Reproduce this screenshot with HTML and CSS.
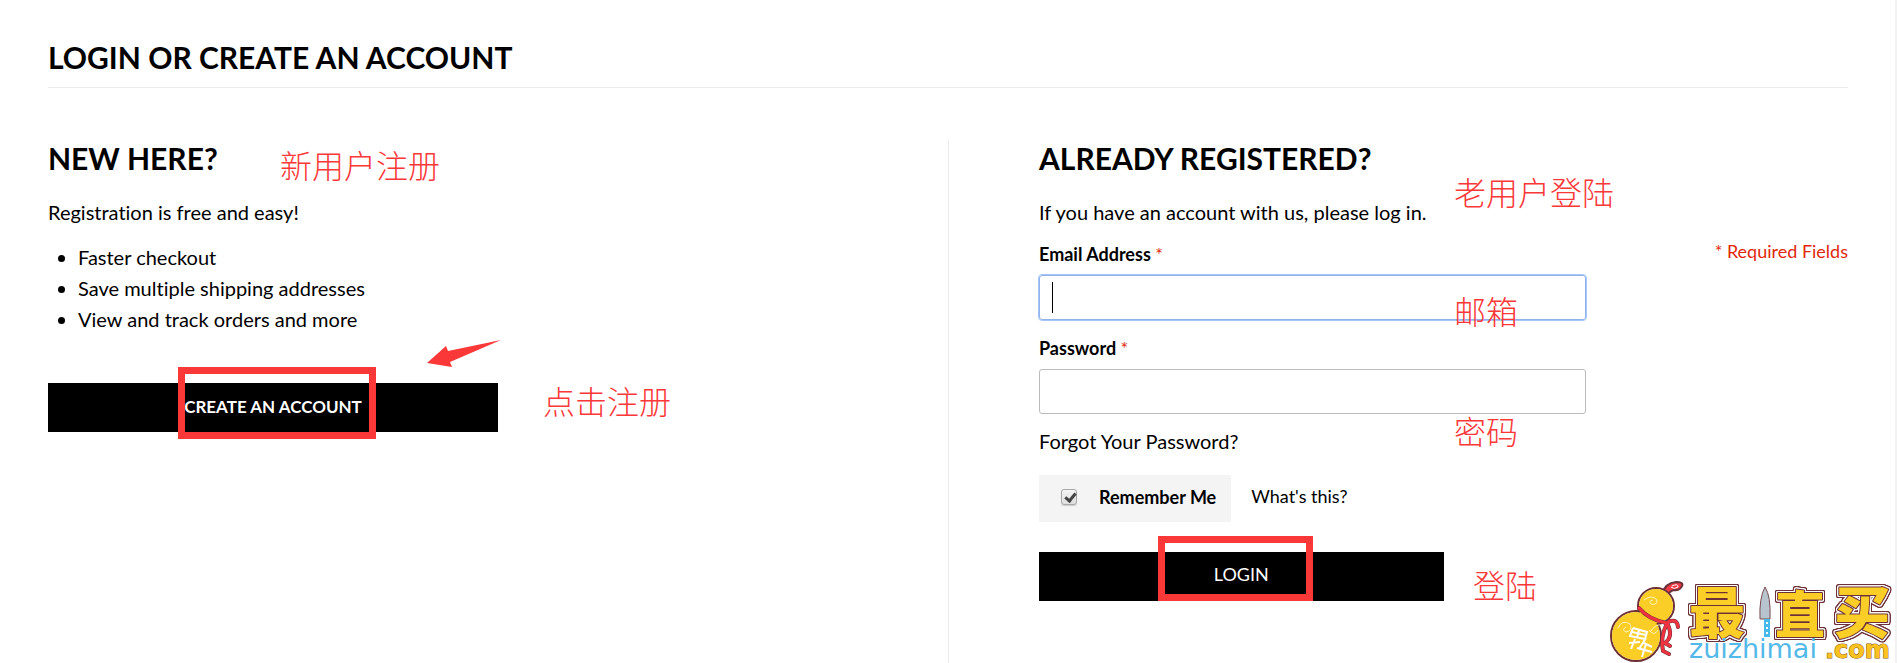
FILE: index.html
```html
<!DOCTYPE html>
<html lang="en">
<head>
  <meta charset="UTF-8" />
  <meta name="viewport" content="width=device-width, initial-scale=1.0"/>
  <title>Customer Login</title>
  <link rel="stylesheet" href="styles.css">
</head>
<body>
  <main class="page">
    <h1>LOGIN OR CREATE AN ACCOUNT</h1>

    <div class="columns">
      <section class="new-users">
        <h2>NEW HERE?</h2>
        <p>Registration is free and easy!</p>
        <ul>
          <li>Faster checkout</li>
          <li>Save multiple shipping addresses</li>
          <li>View and track orders and more</li>
        </ul>
        <button type="button" class="btn btn-create">CREATE AN ACCOUNT</button>

        <span class="note note-new" lang="zh">新用户注册</span>
        <span class="note note-click" lang="zh">点击注册</span>
        <span class="box box-create"></span>
        <svg class="arrow" viewBox="0 0 76 28" width="76" height="28" aria-hidden="true">
          <path d="M1 23 L20 6 L22 11 L75 0 L24 22 L26 27 Z" fill="#fb3838"/>
        </svg>
      </section>

      <section class="registered-users">
        <h2>ALREADY REGISTERED?</h2>
        <form>
          <p>If you have an account with us, please log in.</p>
          <p class="required">* Required Fields</p>
          <label for="email">Email Address <em>*</em></label>
          <div class="field">
            <input type="email" name="email" id="email" class="active" />
            <span class="caret"></span>
          </div>
          <label for="pass">Password <em>*</em></label>
          <div class="field">
            <input type="password" name="password" id="pass" />
          </div>
          <a href="#" class="forgot">Forgot Your Password?</a>
          <div class="remember">
            <div class="remember-box">
              <input type="checkbox" name="remember" id="remember" checked />
              <label for="remember">Remember Me</label>
            </div>
            <a href="#">What's this?</a>
          </div>
          <button type="submit" class="btn btn-login">LOGIN</button>
        </form>

        <span class="note note-old" lang="zh">老用户登陆</span>
        <span class="note note-email" lang="zh">邮箱</span>
        <span class="note note-pass" lang="zh">密码</span>
        <span class="note note-login" lang="zh">登陆</span>
        <span class="box box-login"></span>
      </section>
    </div>
  </main>

  <svg class="watermark" viewBox="0 0 307 103" width="307" height="103" role="img" aria-label="最值买 zuizhimai.com">
    <!-- gourd -->
    <g stroke="#6b3038" stroke-width="2" stroke-linejoin="round">
      <path d="M72 34 Q75 23 86 22 Q94 22 92 26 Q90 31 84 30 Q79 31 77 37 Z" fill="#ef3b46"/>
      <circle cx="46" cy="76" r="25" fill="#fff"/>
      <circle cx="66" cy="46" r="18" fill="#fff"/>
      <circle cx="46" cy="76" r="24" fill="#fbcd27" stroke="none"/>
      <circle cx="66" cy="46" r="17" fill="#fbcd27" stroke="none"/>
    </g>
    <g fill="none" stroke="#fff3b8" stroke-width="1">
      <path d="M54 40 Q62 34 67 40 Q67 46 61 44 Q58 41 63 40"/>
      <path d="M28 68 Q32 59 40 64 Q43 71 36 72 Q31 70 36 67"/>
      <path d="M60 72 Q67 62 72 66 M59 70 Q64 77 68 70"/>
    </g>
    <g fill="none" stroke="#fff" stroke-width="2">
      <path d="M43 68 L57 72 L55 79 L40 76 L43 68 M42 72 L56 75 M49 70 L47 78 M39 83 L50 82 M45 79 L41 89 M56 78 L49 89 M54 83 L62 87 M47 88 L62 92 M56 84 L52 97"/>
    </g>
    <path d="M82 26 Q88 23 88 27 Q84 30 81 27" fill="none" stroke="#fff" stroke-width="1"/>
    <g fill="none" stroke="#6b3038" stroke-width="4" stroke-linecap="round">
      <path d="M49 48 Q58 59 76 63 M76 63 Q87 57 88 67 M77 63 Q84 76 75 83 L80 86 M77 63 Q70 78 73 91 L79 94"/>
    </g>
    <g fill="none" stroke="#ef3340" stroke-width="3" stroke-linecap="round">
      <path d="M49 48 Q58 59 76 63 M76 63 Q87 57 88 67 M77 63 Q84 76 75 83 L80 86 M77 63 Q70 78 73 91 L79 94"/>
    </g>
    <g class="wm-name" lang="zh">
      <text x="99" y="73">最</text>
      <text class="wm-narrow" x="185" y="73">直</text>
      <text x="244" y="73">买</text>
    </g>
    <!-- knife -->
    <path d="M175 27 Q181 36 180 59 L170 59 Q169 38 175 27 Z" fill="#b8c4cd" stroke="#fff" stroke-width="4"/>
    <path d="M175 27 Q181 36 180 59 L170 59 Q169 38 175 27 Z" fill="#b8c4cd" stroke="#7b4b53"/>
    <path d="M174 59 H180 V77 H174 Z" fill="#47b9ea"/>
    <path d="M176 63 h2 M176 68 h2 M176 73 h2" stroke="#fff" stroke-width="2"/>
    <text class="wm-url" x="99" y="98">zuizhimai</text>
    <text class="wm-com" x="235" y="98">.com</text>
  </svg>
</body>
</html>
```
FILE: styles.css
```css
* {
  box-sizing: border-box;
}
body {
  margin: 0;
  position: relative;
  min-height: 100vh;
  display: flex;
  background: #fff;
  border-right: 2px solid #f2f2f2;
  font-family: Lato, sans-serif;
  font-size: 20px;
  line-height: 31px;
  font-variant-ligatures: none;
  color: #000;
}
.page {
  flex: 1;
  display: flex;
  flex-direction: column;
  padding: 39px 47px 0 48px;
}
h1, h2 {
  margin: 0;
  font-size: 30px;
  line-height: 36px;
  font-weight: bold;
}
h1 {
  padding-bottom: 12px;
  border-bottom: 1px solid #ebebeb;
}
h2 {
  margin-bottom: 21px;
}
p {
  margin: 0;
}
a {
  color: #000;
  text-decoration: none;
}
.columns {
  flex: 1;
  display: grid;
  grid-template-columns: 1fr 1fr;
  margin-top: 52px;
}
.new-users, .registered-users {
  position: relative;
}
.registered-users {
  border-left: 1px solid #ebebeb;
  padding-left: 90px;
}
ul {
  margin: 14px 0 48px;
  padding-left: 30px;
}
.btn {
  display: block;
  width: 50%;
  height: 49px;
  padding: 0 0 5px;
  border: none;
  background: #000;
  color: #fff;
  font-family: inherit;
  font-size: 18px;
  cursor: pointer;
}
.btn-create {
  padding-bottom: 3px;
  font-size: 17px;
  font-weight: bold;
}
.required {
  float: right;
  margin-top: 12px;
  font-size: 18px;
  line-height: 22px;
  color: #df280a;
}
label {
  display: block;
  font-size: 18px;
  line-height: 22px;
  font-weight: bold;
}
form > label {
  padding-top: 15px;
}
label em {
  font-style: normal;
  font-weight: normal;
  color: #df280a;
}
.field {
  position: relative;
  max-width: 547px;
  margin: 10px 0 2px;
}
.field input {
  display: block;
  width: 100%;
  height: 45px;
  padding: 0 12px;
  border: 1px solid #bbb;
  border-radius: 3px;
  font-size: 20px;
}
.field input.active {
  border-color: #8fb2ea;
  outline: 1px solid #a6c5fa;
}
.caret {
  position: absolute;
  left: 13px;
  top: 7px;
  width: 1px;
  height: 31px;
  background: #000;
}
.forgot {
  display: block;
  margin-top: 12px;
}
.remember {
  display: flex;
  align-items: center;
  gap: 20px;
  margin: 18px 0 30px;
}
.remember-box {
  display: flex;
  align-items: center;
  height: 47px;
  padding: 0 15px 4px 22px;
  background: #f4f4f4;
}
.remember > a {
  padding-bottom: 4px;
  font-size: 18px;
}
.remember-box input {
  appearance: none;
  width: 16px;
  height: 16px;
  margin: 0 22px 0 0;
  border: 1px solid #a9a9a9;
  border-radius: 3px;
  background: linear-gradient(#f4f4f4, #dedede);
  box-shadow: 0 1px 1px #ccc;
}
.remember-box input:checked::after {
  content: "";
  display: block;
  width: 4px;
  height: 8px;
  margin: 1px 0 0 5px;
  border: solid #444;
  border-width: 0 3px 3px 0;
  box-sizing: content-box;
  transform: rotate(40deg);
}

/* red marks over the form */
.note {
  position: absolute;
  font-family: "Noto Sans CJK SC", sans-serif;
  font-size: 32px;
  font-weight: 300;
  line-height: 32px;
  white-space: nowrap;
  color: #fb3838;
}
.note-new { left: 232px; top: 8px; }
.note-click { left: 495px; top: 244px; }
.note-old { left: 505px; top: 35px; }
.note-email { left: 505px; top: 154px; }
.note-pass { left: 505px; top: 274px; }
.note-login { left: 524px; top: 428px; }
.box {
  position: absolute;
  border: 7px solid #fb3838;
}
.box-create {
  left: 130px;
  top: 227px;
  width: 198px;
  height: 72px;
}
.box-login {
  left: 209px;
  top: 396px;
  width: 155px;
  height: 65px;
}
.arrow {
  position: absolute;
  left: 378px;
  top: 200px;
}

.watermark {
  position: absolute;
  right: -2px;
  bottom: 0;
}
/* yellow letters, white gap, brown outer line */
.wm-name {
  font-family: "Noto Sans CJK SC", sans-serif;
  font-size: 56px;
  font-weight: 900;
  fill: #fbcd27;
  stroke: #6b3038;
  stroke-width: 2px;
  stroke-linejoin: round;
  paint-order: stroke;
  filter: drop-shadow(1px 0 #fff) drop-shadow(-1px 0 #fff) drop-shadow(0 1px #fff) drop-shadow(0 -1px #fff)
    drop-shadow(1px 0 #6b3038) drop-shadow(-1px 0 #6b3038) drop-shadow(0 1px #6b3038) drop-shadow(0 -1px #6b3038);
}
.wm-narrow {
  font-size: 50px;
}
.wm-url {
  font-family: "DejaVu Sans", sans-serif;
  font-size: 27px;
  fill: #53b9e9;
}
.wm-com {
  font-family: "DejaVu Sans", sans-serif;
  font-size: 24px;
  font-weight: bold;
  fill: #fbc21f;
  stroke: #8a5a20;
  stroke-width: 1px;
  paint-order: stroke;
}
```
